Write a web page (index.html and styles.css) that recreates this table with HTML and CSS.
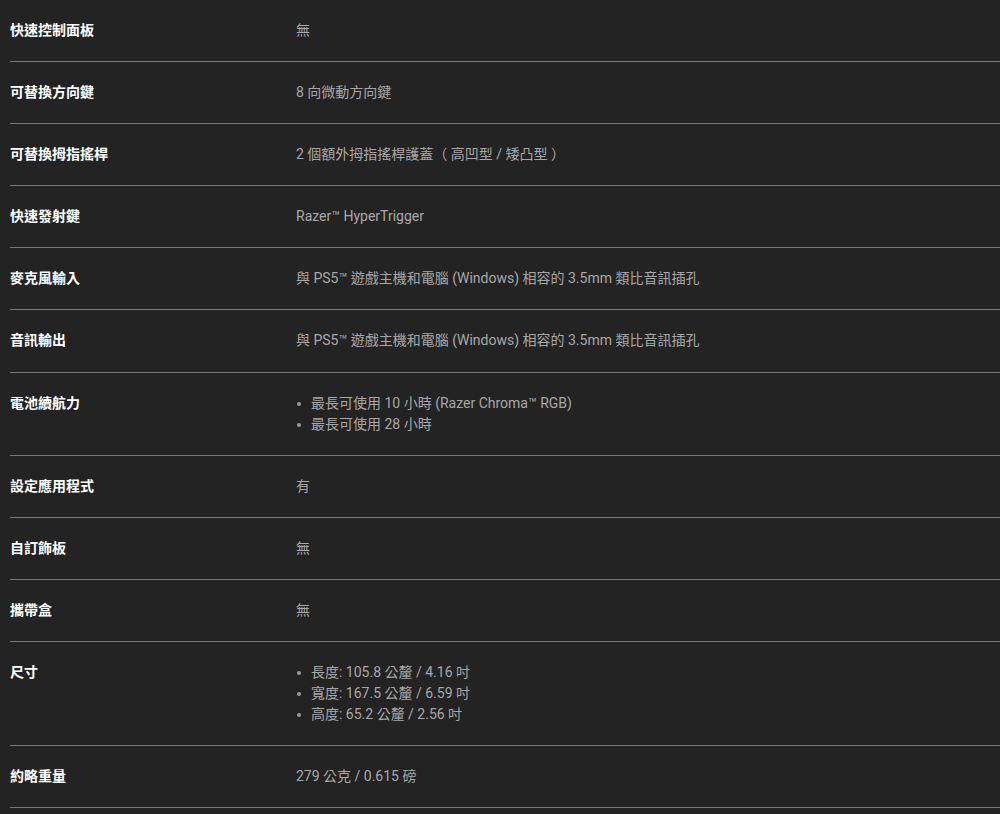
FILE: index.html
```html
<!DOCTYPE html>
<html lang="zh-Hant">
<head>
<meta charset="utf-8">
<link rel="stylesheet" href="styles.css">
</head>
<body>
<div class="specs">
  <div class="row"><div class="label">快速控制面板</div><div class="value">無</div></div>
  <div class="row"><div class="label">可替換方向鍵</div><div class="value">8 向微動方向鍵</div></div>
  <div class="row"><div class="label">可替換拇指搖桿</div><div class="value">2 個額外拇指搖桿護蓋（ 高凹型 / 矮凸型 ）</div></div>
  <div class="row"><div class="label">快速發射鍵</div><div class="value">Razer™ HyperTrigger</div></div>
  <div class="row"><div class="label">麥克風輸入</div><div class="value">與 PS5™ 遊戲主機和電腦 (Windows) 相容的 3.5mm 類比音訊插孔</div></div>
  <div class="row"><div class="label">音訊輸出</div><div class="value">與 PS5™ 遊戲主機和電腦 (Windows) 相容的 3.5mm 類比音訊插孔</div></div>
  <div class="row"><div class="label">電池續航力</div><div class="value"><ul class="list"><li>最長可使用 10 小時 (Razer Chroma™ RGB)</li><li>最長可使用 28 小時</li></ul></div></div>
  <div class="row"><div class="label">設定應用程式</div><div class="value">有</div></div>
  <div class="row"><div class="label">自訂飾板</div><div class="value">無</div></div>
  <div class="row"><div class="label">攜帶盒</div><div class="value">無</div></div>
  <div class="row"><div class="label">尺寸</div><div class="value"><ul class="list"><li>長度: 105.8 公釐 / 4.16 吋</li><li>寬度: 167.5 公釐 / 6.59 吋</li><li>高度: 65.2 公釐 / 2.56 吋</li></ul></div></div>
  <div class="row"><div class="label">約略重量</div><div class="value">279 公克 / 0.615 磅</div></div>
</div>
</body>
</html>
```
FILE: styles.css
```css
html, body {
  margin: 0;
  padding: 0;
  background: #232323;
}
body {
  font-family: Roboto, "Noto Sans CJK TC", sans-serif;
  font-size: 14px;
  line-height: 21px;
  overflow: hidden;
}
.specs {
  margin-left: 10px;
}
.row {
  display: flex;
  padding: 20px 0 20.1px;
  border-bottom: 1px solid #7a7a7a;
}
.label {
  width: 286px;
  flex: none;
  color: #ffffff;
  font-weight: bold;
}
.value {
  color: #a8a8a8;
}
.list {
  list-style: none;
  margin: 0;
  padding: 0;
}
.list li {
  position: relative;
  padding-left: 15px;
}
.list li::before {
  content: "";
  position: absolute;
  left: 1px;
  top: 9px;
  width: 4px;
  height: 4px;
  border-radius: 50%;
  background: #9a9a9a;
}
```
